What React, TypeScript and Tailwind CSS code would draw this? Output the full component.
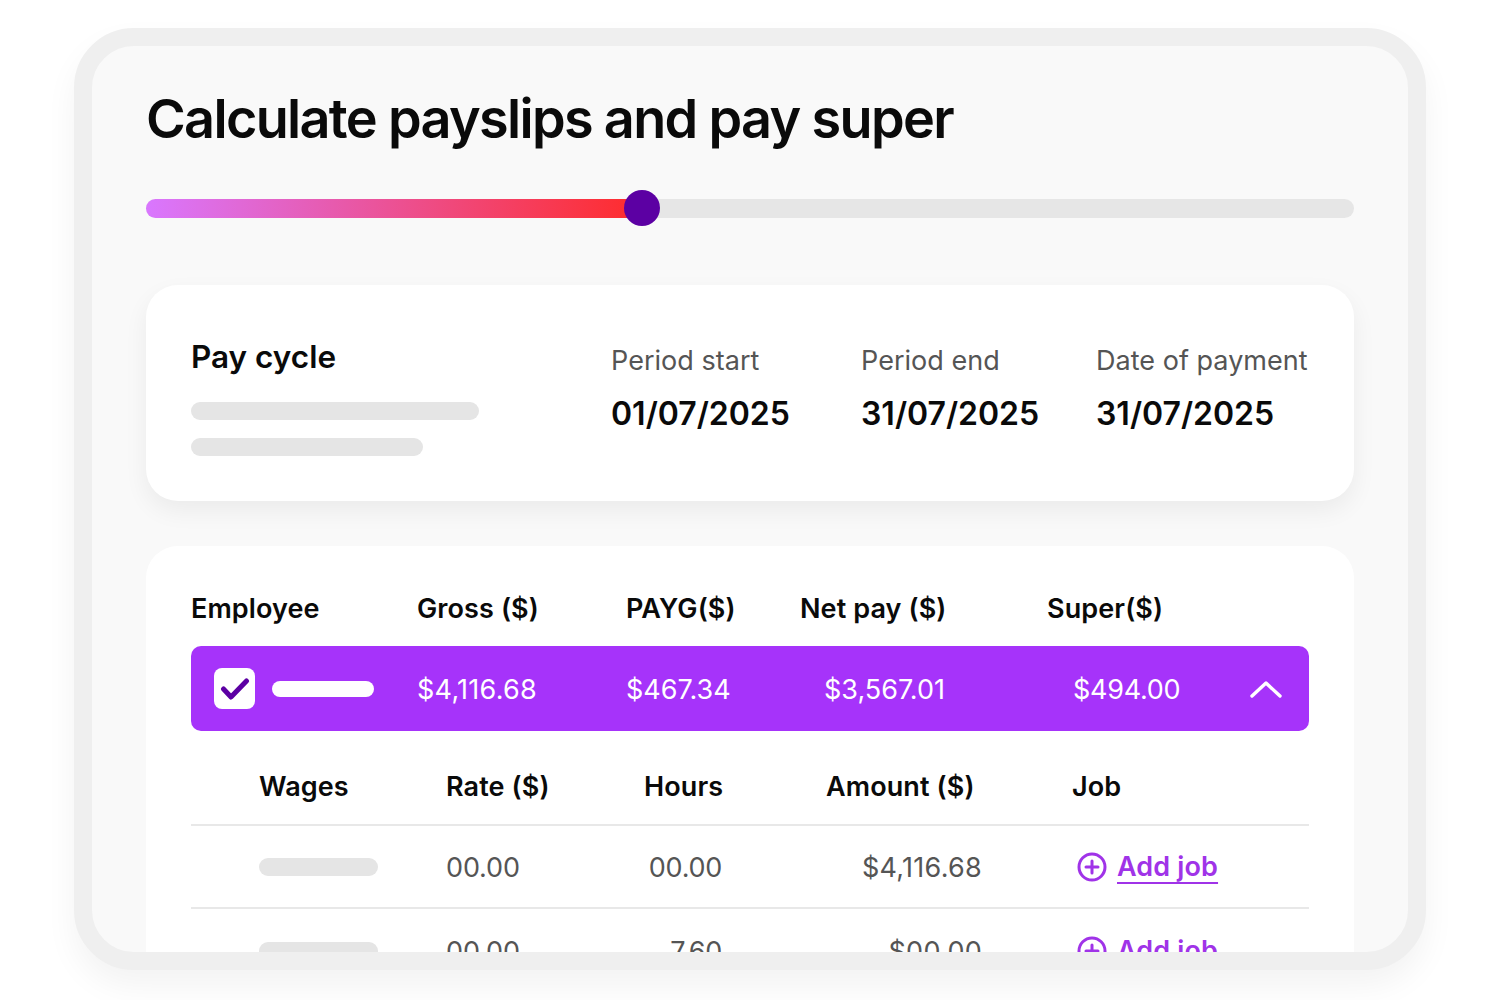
import React from "react";

const font = { fontFamily: "Inter, 'Liberation Sans', sans-serif" };

function PlusCircle() {
  return (
    <svg width="30" height="30" viewBox="0 0 30 30" fill="none" stroke="#a033e8" strokeWidth="3" strokeLinecap="round" className="shrink-0">
      <circle cx="15" cy="15" r="13" />
      <path d="M15 9v12M9 15h12" />
    </svg>
  );
}

function AddJob() {
  return (
    <div className="flex items-center gap-[10px] pl-[5px] text-[#a033e8] font-semibold text-[27px] tracking-[0.005em]">
      <PlusCircle />
      <span className="underline underline-offset-[6px] decoration-2 pt-[1px]">Add job</span>
    </div>
  );
}

function Row({ wages, rate, hours, amount, last }: { wages?: boolean; rate: string; hours: string; amount: string; last?: boolean }) {
  return (
    <div className={`grid grid-cols-[255px_201px_75px_260px_1fr] items-center text-[27px] text-[#555555] h-[83px] ${last ? "" : "border-b-2 border-[#e8e8e8]"}`}>
      <div className="pl-[68px]">
        {wages && <div className="h-[18px] w-[119px] rounded-full bg-[#e5e5e5]" />}
      </div>
      <div className="pt-[4px] tracking-[-0.005em]">{rate}</div>
      <div className="text-right pt-[4px] tracking-[-0.01em]">{hours}</div>
      <div className="text-right pt-[4px] tracking-[0.01em]">{amount}</div>
      <div className="pl-[90px] pt-[1px]">
        <AddJob />
      </div>
    </div>
  );
}

export default function App() {
  return (
    <div className="w-[1500px] h-[1000px] bg-white pt-[28px] pl-[74px] overflow-hidden" style={font}>
      <div className="w-[1352px] h-[942px] rounded-[60px] border-[18px] border-[#efefef] bg-[#f9f9f9] overflow-hidden shadow-[0_16px_32px_rgba(0,0,0,0.05)] px-[54px] pt-[38px]">
        <h1 className="text-[54px] leading-[70px] font-semibold tracking-[-0.031em] text-[#0a0a0a]">
          Calculate payslips and pay super
        </h1>

        <div className="relative mt-[45px] h-[19px] w-[1208px] rounded-full bg-[#e6e6e6]">
          <div className="h-full w-[496px] rounded-full bg-[linear-gradient(90deg,#d977ff_0%,#f0487a_62%,#ff2b2b_100%)]" />
          <div className="absolute left-[478px] top-[-9px] h-[36px] w-[36px] rounded-full bg-[#5c00a3]" />
        </div>

        <section className="mt-[67px] h-[216px] w-[1208px] rounded-[32px] bg-white shadow-[0_10px_24px_rgba(0,0,0,0.06)] pl-[45px] pt-[52px] flex">
          <div className="w-[420px]">
            <div className="text-[31.500px] leading-[40px] font-semibold text-[#0a0a0a]">Pay cycle</div>
            <div className="mt-[25px] h-[18px] w-[288px] rounded-full bg-[#e5e5e5]" />
            <div className="mt-[18px] h-[18px] w-[232px] rounded-full bg-[#e5e5e5]" />
          </div>
          <Period label="Period start" value="01/07/2025" w="w-[250px]" />
          <Period label="Period end" value="31/07/2025" w="w-[235px]" />
          <Period label="Date of payment" value="31/07/2025" w="" />
        </section>

        <section className="mt-[45px] w-[1208px] h-[500px] rounded-t-[32px] bg-white px-[45px] pt-[43px]">
          <div className="grid grid-cols-[226px_209px_174px_247px_1fr] text-[27px] leading-[40px] font-semibold tracking-[0.004em] text-[#0a0a0a]">
            <div>Employee</div>
            <div>Gross ($)</div>
            <div>PAYG($)</div>
            <div>Net pay ($)</div>
            <div>Super($)</div>
          </div>

          <div className="mt-[17px] h-[85px] rounded-[10px] bg-[#a633fa] text-white text-[27px] grid grid-cols-[226px_209px_174px_248px_1fr] items-center">
            <div className="flex items-center pl-[23px] gap-[17px]">
              <div className="h-[41px] w-[41px] rounded-[8px] bg-white flex items-center justify-center">
                <svg width="30" height="26" viewBox="0 0 30 26" fill="none" stroke="#5c00a3" strokeWidth="5" strokeLinecap="round" strokeLinejoin="round">
                  <path d="M3.500 13l7.500 8L26.500 5" />
                </svg>
              </div>
              <div className="h-[16px] w-[102px] rounded-full bg-white" />
            </div>
            <div className="pt-[3px] tracking-[0.01em]">$4,116.68</div>
            <div className="pt-[3px]">$467.34</div>
            <div className="pl-[24px] pt-[3px]">$3,567.01</div>
            <div className="flex items-center justify-between pl-[25px] pr-[27px]">
              <span className="pt-[3px] tracking-[-0.01em]">$494.00</span>
              <svg width="32" height="18" viewBox="0 0 32 18" fill="none" stroke="white" strokeWidth="3.400" strokeLinecap="round" strokeLinejoin="round">
                <path d="M2 16L16 3l14 13" />
              </svg>
            </div>
          </div>

          <div className="grid grid-cols-[255px_198px_76px_264px_1fr] items-center text-[27px] font-semibold tracking-[0.004em] text-[#0a0a0a] h-[95px] pt-[19px] border-b-2 border-[#e8e8e8]">
            <div className="pl-[68px]">Wages</div>
            <div>Rate ($)</div>
            <div className="text-right">Hours</div>
            <div className="pl-[106px] whitespace-nowrap">Amount ($)</div>
            <div className="pl-[88px]">Job</div>
          </div>
          <Row wages rate="00.00" hours="00.00" amount="$4,116.68" />
          <Row wages rate="00.00" hours="7.60" amount="$00.00" last />
        </section>
      </div>
    </div>
  );
}

function Period({ label, value, w }: { label: string; value: string; w: string }) {
  return (
    <div className={w}>
      <div className="text-[27px] leading-[46px] pt-[1px] text-[#555555] tracking-[0.001em]">{label}</div>
      <div className="mt-[8px] text-[32px] leading-[44px] font-semibold text-[#0a0a0a]">{value}</div>
    </div>
  );
}
